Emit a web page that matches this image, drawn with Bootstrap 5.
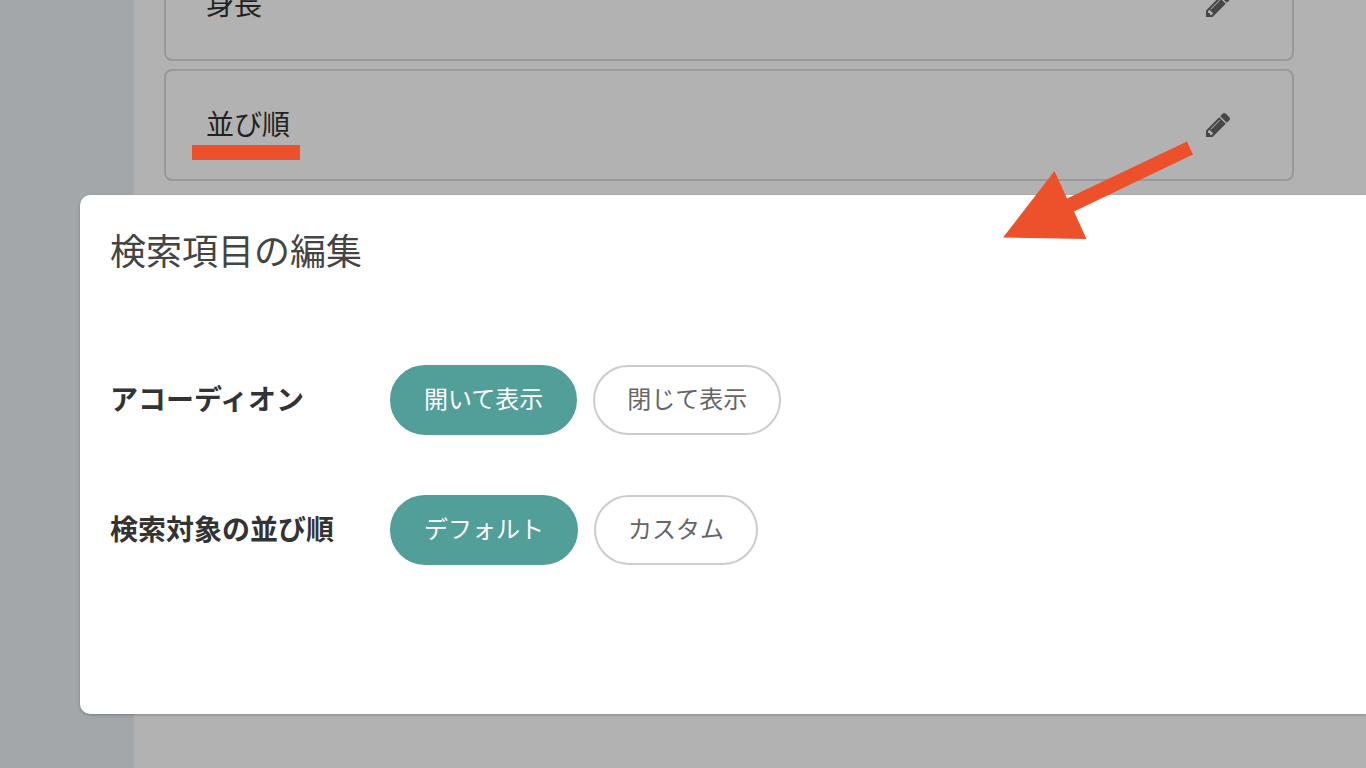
<!DOCTYPE html>
<html lang="ja">
<head>
<meta charset="utf-8">
<meta name="viewport" content="width=device-width, initial-scale=1">
<title>検索項目の編集</title>
<link href="https://cdn.jsdelivr.net/npm/bootstrap@5.3.0/dist/css/bootstrap.min.css" rel="stylesheet">
<style>
  body { font-family: "Noto Sans CJK JP", sans-serif; color: #333; background: #fff; }
  .app-shell { min-height: 100vh; }
  .side-rail { width: 134px; background: #eaf0f4; }
  .field-area { padding: 0 72px 0 30px; }
  /* The list is scrolled part of the way under the top edge */
  .field-list { margin-top: -51px; gap: 8px; }
  .field-item { height: 112px; padding: 0 62px 0 40px; border: 2px solid #dbdbdb; border-radius: 8px; font-size: 28px; line-height: 40px; }
  .field-name { padding-bottom: 4px; }
  .edit-link { color: #666; line-height: 0; }
  .backdrop-shade { background: rgba(0, 0, 0, .3); z-index: 1; }
  .edit-panel { top: 195px; left: 80px; right: 0; z-index: 2; padding: 28px 30px 149px; border-radius: 10px 0 0 10px; box-shadow: 0 1px 3px rgba(0, 0, 0, .25); }
  .panel-title { font-size: 36px; line-height: 52px; color: #444; margin-bottom: 90px; font-weight: 400; }
  .option-rows { gap: 60px; }
  .option-name { width: 280px; padding-bottom: 4px; font-size: 28px; line-height: 40px; font-weight: 700; }
  .option-set { gap: 16px; }
  .pill { height: 70px; padding: 0 32px 4px; border: 2px solid #ccc; font-size: 24px; line-height: 36px; color: #666; --bs-btn-hover-color: #666; --bs-btn-hover-border-color: #ccc; }
  .pill.active { background: #529e98; border-color: #529e98; color: #fff; }
  .note-line { top: 42px; left: -14px; width: 108px; height: 15px; background: #ed512c; z-index: 3; }
  .note-arrow { top: 28px; right: 37px; z-index: 3; pointer-events: none; }
</style>
</head>
<body class="overflow-hidden">
<svg class="d-none" aria-hidden="true">
  <symbol id="pencil" viewBox="0 0 1515 1515"><path transform="translate(0 1387) scale(1 -1)" fill-rule="evenodd" d="M363 0l91 91l-235 235l-91 -91v-107h128v-128h107zM886 928q0 22 -22 22q-10 0 -17 -7l-542 -542q-7 -7 -7 -17q0 -22 22 -22q10 0 17 7l542 542q7 7 7 17zM832 1120l416 -416l-832 -832h-416v416zM1515 1024q0 -53 -37 -90l-166 -166l-416 416l166 165q36 38 90 38q53 0 91 -38l235 -234q37 -39 37 -91z"/></symbol>
</svg>
<div class="app-shell d-flex position-relative">
  <aside class="side-rail flex-shrink-0"></aside>
  <main class="field-area flex-grow-1">
    <ul class="field-list list-unstyled d-flex flex-column mb-0">
      <li class="field-item d-flex align-items-center justify-content-between">
        <span class="field-name">身長</span>
        <a class="edit-link" href="#" aria-label="身長を編集">
          <svg width="24" height="24" fill="currentColor" aria-hidden="true"><use href="#pencil"/></svg>
        </a>
      </li>
      <li class="field-item d-flex align-items-center justify-content-between">
        <span class="field-name position-relative">並び順<span class="note-line position-absolute"></span></span>
        <span class="position-relative d-flex">
          <a class="edit-link" href="#" aria-label="並び順を編集">
            <svg width="24" height="24" fill="currentColor" aria-hidden="true"><use href="#pencil"/></svg>
          </a>
          <svg class="note-arrow position-absolute" width="190" height="100" viewBox="1003 141 190 100" aria-hidden="true"><path fill="#ed512c" d="M1003 237.500 1054.500 171 1067 198.500 1187 141.500 1193 154.500 1074 211.500 1086.500 239Z"/></svg>
        </span>
      </li>
    </ul>
  </main>
  <div class="backdrop-shade position-absolute top-0 start-0 w-100 h-100"></div>
  <section class="edit-panel position-absolute bg-white" role="dialog" aria-labelledby="panelTitle">
    <h1 class="panel-title" id="panelTitle">検索項目の編集</h1>
    <div class="option-rows d-flex flex-column">
      <div class="d-flex align-items-center" role="group" aria-labelledby="optAccordion">
        <div class="option-name" id="optAccordion">アコーディオン</div>
        <div class="option-set d-flex">
          <button type="button" class="btn pill rounded-pill active" aria-pressed="true">開いて表示</button>
          <button type="button" class="btn pill rounded-pill" aria-pressed="false">閉じて表示</button>
        </div>
      </div>
      <div class="d-flex align-items-center" role="group" aria-labelledby="optOrder">
        <div class="option-name" id="optOrder">検索対象の並び順</div>
        <div class="option-set d-flex">
          <button type="button" class="btn pill rounded-pill active" aria-pressed="true">デフォルト</button>
          <button type="button" class="btn pill rounded-pill" aria-pressed="false">カスタム</button>
        </div>
      </div>
    </div>
  </section>
</div>
<script src="https://cdn.jsdelivr.net/npm/bootstrap@5.3.0/dist/js/bootstrap.bundle.min.js"></script>
</body>
</html>
